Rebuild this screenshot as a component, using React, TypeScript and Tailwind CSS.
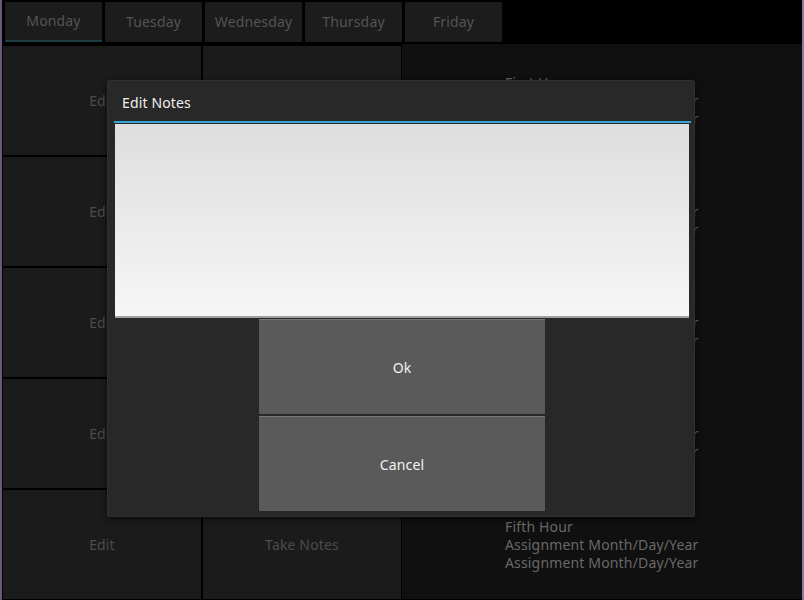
import React from "react";

const days = ["Monday", "Tuesday", "Wednesday", "Thursday", "Friday"];
const hours = ["First Hour", "Second Hour", "Third Hour", "Fourth Hour", "Fifth Hour"];

export default function App() {
  return (
    <div
      className="relative w-[804px] h-[600px] overflow-hidden bg-black border-l-2 border-r-2 border-l-[#6b5a7d] border-r-[#8a7a9c]"
      style={{ fontFamily: '"Noto Sans", "Open Sans", sans-serif' }}
    >
      {/* Tabs */}
      <div className="flex gap-[3px] pl-[3px] pt-[2px] h-[44px]">
        {days.map((d, i) => (
          <div
            key={d}
            className={`w-[97px] h-[40px] flex items-center justify-center pb-[1px] bg-[#1c1c1c] text-[14px] tracking-[0.15px] text-[#545454] ${
              i === 0 ? "border-b-2 border-[#1e3d45]" : ""
            }`}
          >
            {d}
          </div>
        ))}
      </div>

      {/* Grid */}
      <div className="flex">
        <div className="flex flex-col gap-[2px] pl-[1px] pt-[2px]">
          {hours.map((h) => (
            <div key={h} className="flex gap-[2px] h-[109px]">
              <div className="w-[198px] bg-[#1b1b1b] flex items-center justify-center text-[14px] tracking-[0.15px] text-[#4c4c4c]">
                Edit
              </div>
              <div className="w-[198px] bg-[#1b1b1b] flex items-center justify-center text-[14px] tracking-[0.15px] text-[#4c4c4c]">
                Take Notes
              </div>
            </div>
          ))}
        </div>
        <div className="flex-1 bg-[#101010] flex flex-col gap-[2px] pt-[2px] ml-[1px]">
          {hours.map((h) => (
            <div key={h} className="h-[109px] flex flex-col justify-center pl-[103px] text-[14px] tracking-[0.16px] leading-[18px] text-[#686868]">
              <div>{h}</div>
              <div>Assignment Month/Day/Year</div>
              <div>Assignment Month/Day/Year</div>
            </div>
          ))}
        </div>
      </div>

      {/* Dialog */}
      <div className="absolute left-[105px] top-[80px] w-[588px] h-[437px] bg-[#282828] border border-[#303030] rounded-[2px] shadow-[0_2px_6px_rgba(0,0,0,0.6)] flex flex-col">
        <div className="h-[40px] flex items-center pl-[14px] pt-[3px] text-[14px] tracking-[0.15px] text-[#f0f0f0]">
          Edit Notes
        </div>
        <div className="ml-[6px] mr-[3px] h-[2px] bg-[#33a6d6]" />
        <div className="ml-[7px] mr-[5px] mt-[1px] h-[194px] bg-gradient-to-b from-[#dedede] to-[#f6f6f6] border-b-2 border-[#a0a0a0]" />
        <div className="flex flex-col items-center gap-[2px] mt-[1px] pl-[2px]">
          <div className="w-[286px] h-[95px] bg-[#5a5a5a] border-t border-[#787878] flex items-center justify-center text-[14px] tracking-[0.15px] text-[#f2f2f2]">
            Ok
          </div>
          <div className="w-[286px] h-[95px] bg-[#5a5a5a] border-t border-[#787878] flex items-center justify-center text-[14px] tracking-[0.15px] text-[#f2f2f2]">
            Cancel
          </div>
        </div>
      </div>
    </div>
  );
}
